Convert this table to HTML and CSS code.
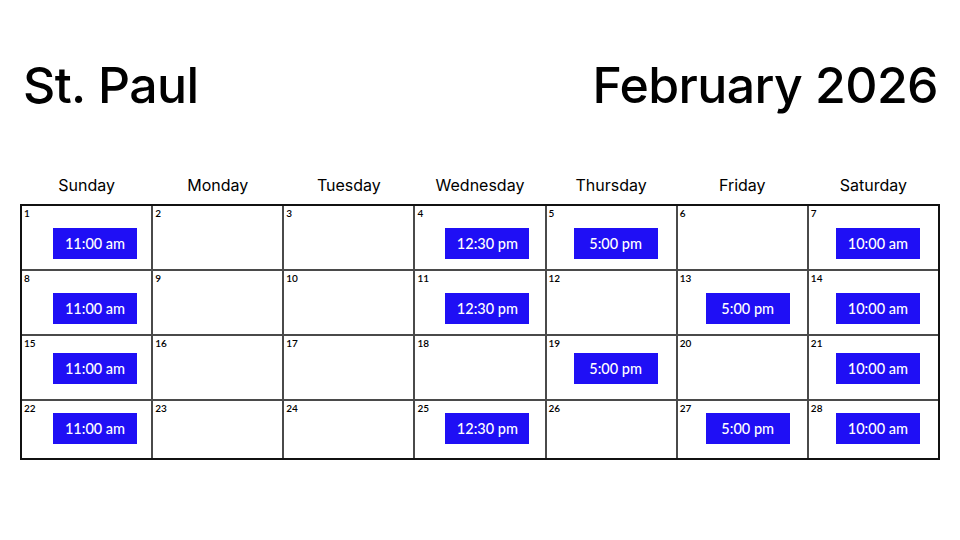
FILE: index.html
```html
<!DOCTYPE html>
<html lang="en">
<head>
<meta charset="utf-8">
<title>St. Paul — February 2026</title>
<link rel="stylesheet" href="styles.css">
</head>
<body>
<div class="page">
  <header class="top">
    <h1 class="title">St. Paul</h1>
    <h1 class="title">February 2026</h1>
  </header>
  <div class="days">
    <div>Sunday</div><div>Monday</div><div>Tuesday</div><div>Wednesday</div><div>Thursday</div><div>Friday</div><div>Saturday</div>
  </div>
  <div class="cal">
    <div class="cell r1"><span class="num">1</span><span class="ev">11:00 am</span></div>
    <div class="cell r1"><span class="num">2</span></div>
    <div class="cell r1"><span class="num">3</span></div>
    <div class="cell r1"><span class="num">4</span><span class="ev">12:30 pm</span></div>
    <div class="cell r1"><span class="num">5</span><span class="ev">5:00 pm</span></div>
    <div class="cell r1"><span class="num">6</span></div>
    <div class="cell r1"><span class="num">7</span><span class="ev">10:00 am</span></div>

    <div class="cell r2"><span class="num">8</span><span class="ev">11:00 am</span></div>
    <div class="cell r2"><span class="num">9</span></div>
    <div class="cell r2"><span class="num">10</span></div>
    <div class="cell r2"><span class="num">11</span><span class="ev">12:30 pm</span></div>
    <div class="cell r2"><span class="num">12</span></div>
    <div class="cell r2"><span class="num">13</span><span class="ev">5:00 pm</span></div>
    <div class="cell r2"><span class="num">14</span><span class="ev">10:00 am</span></div>

    <div class="cell r3"><span class="num">15</span><span class="ev">11:00 am</span></div>
    <div class="cell r3"><span class="num">16</span></div>
    <div class="cell r3"><span class="num">17</span></div>
    <div class="cell r3"><span class="num">18</span></div>
    <div class="cell r3"><span class="num">19</span><span class="ev">5:00 pm</span></div>
    <div class="cell r3"><span class="num">20</span></div>
    <div class="cell r3"><span class="num">21</span><span class="ev">10:00 am</span></div>

    <div class="cell r4"><span class="num">22</span><span class="ev">11:00 am</span></div>
    <div class="cell r4"><span class="num">23</span></div>
    <div class="cell r4"><span class="num">24</span></div>
    <div class="cell r4"><span class="num">25</span><span class="ev">12:30 pm</span></div>
    <div class="cell r4"><span class="num">26</span></div>
    <div class="cell r4"><span class="num">27</span><span class="ev">5:00 pm</span></div>
    <div class="cell r4"><span class="num">28</span><span class="ev">10:00 am</span></div>
  </div>
</div>
</body>
</html>
```
FILE: styles.css
```css
html, body {
  margin: 0;
  padding: 0;
  background: #fff;
}
.page {
  width: 960px;
  height: 540px;
  box-sizing: border-box;
  padding: 0 20px;
  font-family: "Inter", "Open Sans", sans-serif;
  color: #000;
}
.top {
  display: flex;
  justify-content: space-between;
  align-items: baseline;
  height: 150px;
  padding: 60px 2px 0 3px;
  box-sizing: border-box;
}
.title {
  margin: 0;
  font-size: 50px;
  font-weight: 500;
  line-height: 1;
  letter-spacing: -0.6px;
}
.days {
  display: grid;
  grid-template-columns: repeat(7, 1fr);
  column-gap: 2px;
  padding: 0 2px;
  height: 54px;
  align-items: end;
  padding-bottom: 9px;
  box-sizing: border-box;
  font-size: 16px;
  text-align: center;
}
.cal {
  display: grid;
  grid-template-columns: repeat(7, 1fr);
  grid-template-rows: 63px 63px 63px 57px;
  gap: 2px;
  background: #4a4a4a;
  border: 2px solid #111;
}
.cell {
  background: #fff;
  display: flex;
  flex-direction: column;
  align-items: flex-start;
  font-family: "Lato", sans-serif;
}
.num {
  font-size: 10px;
  font-weight: 600;
  line-height: 1;
  margin: 2px 0 0 2px;
  height: 10px;
}
.ev {
  background: #1f0ff5;
  color: #fff;
  width: 84px;
  height: 31px;
  line-height: 31px;
  text-align: center;
  font-size: 14.5px;
  font-weight: 500;
  margin-left: 28px;
}
.cell:nth-child(7n+1) .ev { margin-left: 31px; }
.cell:nth-child(7n+4) .ev { margin-left: 30px; }
.cell:nth-child(7n+5) .ev,
.cell:nth-child(7n+7) .ev { margin-left: 27px; }
.r1 .ev, .r2 .ev { margin-top: 10px; }
.r3 .ev { margin-top: 5px; }
.r4 .ev { margin-top: 0; }
```
